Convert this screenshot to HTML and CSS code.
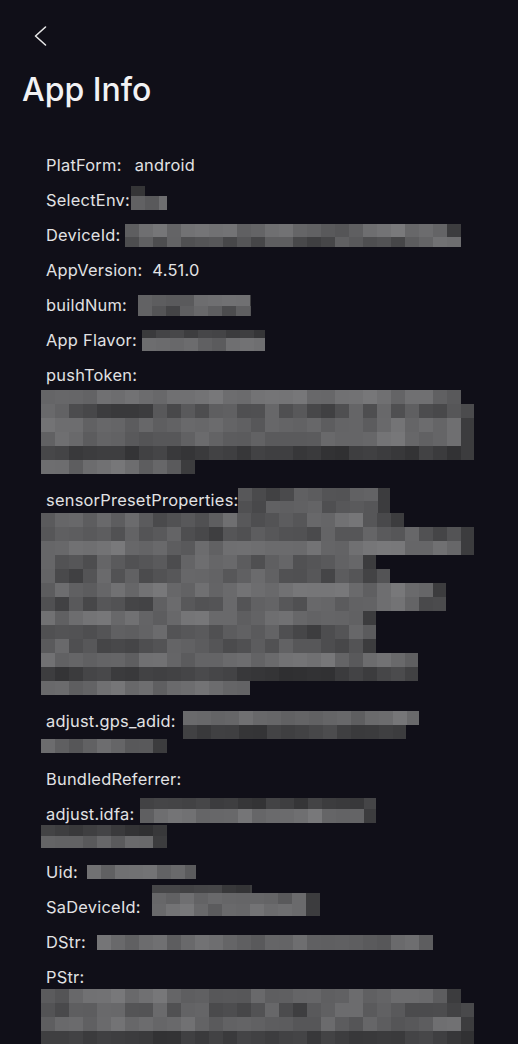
FILE: index.html
```html
<!DOCTYPE html>
<html lang="en">
<head>
<meta charset="utf-8">
<title>App Info</title>
<link rel="stylesheet" href="styles.css">
</head>
<body>
<div class="screen">
  <div class="topbar">
    <svg class="back" width="24" height="24" viewBox="0 0 24 24" fill="none"><path d="M16.5 3 L6.5 12 L16.5 21" stroke="#e6e6e6" stroke-width="1.6" stroke-linecap="round" stroke-linejoin="round"/></svg>
  </div>
  <h1 class="title">App Info</h1>
  <div class="list">
    <div class="row"><div class="line"><span class="label">PlatForm:</span><span class="value value-platform">android</span></div></div>
    <div class="row"><div class="line"><span class="label">SelectEnv:</span><div class="pix pix-env" data-seed="2" data-rows="14:10:d,36:14:m"></div></div></div>
    <div class="row"><div class="line"><span class="label">DeviceId:</span><div class="pix pix-device" data-seed="3" data-rows="336:13:m,336:10:x"></div></div></div>
    <div class="row"><div class="line"><span class="label">AppVersion:</span><span class="value">4.51.0</span></div></div>
    <div class="row"><div class="line"><span class="label">buildNum:</span><div class="pix pix-build" data-seed="5" data-rows="113:11:m,113:10:x"></div></div></div>
    <div class="row"><div class="line"><span class="label">App Flavor:</span><div class="pix pix-flavor" data-seed="6" data-rows="123:8:d,123:13:m"></div></div></div>
    <div class="row row-push">
      <div class="line"><span class="label">pushToken:</span></div>
      <div class="pix block block-push" data-seed="7" data-rows="420:14:m,433:14:x,433:14:m,433:14:m,433:14:d,154:14:m"></div>
    </div>
    <div class="row row-sensor">
      <div class="line line-top"><span class="label">sensorPresetProperties:</span><div class="pix pix-sensor" data-seed="8" data-rows="152:13:x,152:13:x"></div></div>
      <div class="pix block block-sensor" data-seed="9" data-rows="363:14:x,433:14:x,433:14:m,335:14:x,349:14:x,405:14:m,405:14:x,335:14:m,335:14:x,335:14:x,377:14:m,377:14:d,209:14:m"></div>
    </div>
    <div class="row row-gps">
      <div class="line line-top"><span class="label">adjust.gps_adid:</span><div class="pix pix-gps" data-seed="10" data-rows="236:14:m,223:14:d"></div></div>
      <div class="pix block block-gps" data-seed="11" data-rows="126:14:m"></div>
    </div>
    <div class="row"><div class="line"><span class="label">BundledReferrer:</span></div></div>
    <div class="row row-idfa">
      <div class="line line-top"><span class="label">adjust.idfa:</span><div class="pix pix-idfa" data-seed="12" data-rows="236:11:d,236:14:m"></div></div>
      <div class="pix block block-idfa" data-seed="13" data-rows="126:11:d,126:12:m"></div>
    </div>
    <div class="row"><div class="line"><span class="label">Uid:</span><div class="pix pix-uid" data-seed="14" data-rows="109:14:m"></div></div></div>
    <div class="row"><div class="line line-bottom"><span class="label">SaDeviceId:</span><div class="pix pix-sa" data-seed="15" data-rows="100:8:d,168:11:m,168:12:m"></div></div></div>
    <div class="row"><div class="line"><span class="label">DStr:</span><div class="pix pix-dstr" data-seed="16" data-rows="336:15:m"></div></div></div>
    <div class="row row-pstr">
      <div class="line"><span class="label">PStr:</span></div>
      <div class="pix block block-pstr" data-seed="17" data-rows="420:14:m,433:14:x,433:14:m,433:14:d"></div>
    </div>
  </div>
</div>
<script src="script.js"></script>
</body>
</html>
```

FILE: styles.css
```css
html, body {
  margin: 0;
  padding: 0;
  background: #100f18;
}
.screen {
  width: 518px;
  height: 1044px;
  overflow: hidden;
  background: #100f18;
  color: #e2e2e4;
  font-family: "Inter", "Noto Sans", sans-serif;
}
.topbar {
  height: 70px;
  box-sizing: border-box;
  padding: 24px 0 0 29px;
}
.back {
  display: block;
}
.title {
  margin: 0;
  padding-left: 22px;
  height: 40px;
  line-height: 40px;
  font-size: 32px;
  font-weight: 500;
  color: #f2f2f4;
}
.list {
  padding: 43px 0 0 46px;
}
.row {
  margin-bottom: 11px;
}
.line {
  display: flex;
  align-items: center;
  height: 24px;
  line-height: 24px;
  font-size: 16.4px;
  letter-spacing: 0.25px;
  white-space: nowrap;
}
.line-top {
  align-items: flex-start;
}
.line-bottom {
  align-items: flex-end;
}
.label {
  flex: none;
}
.value {
  margin-left: 10px;
}
.value-platform {
  margin-left: 13px;
}
.pix {
  display: flex;
  flex-direction: column;
  flex: none;
  margin-left: 3px;
}
.pix-row {
  display: flex;
  overflow: hidden;
  flex: none;
}
.pix-cell {
  flex: none;
  width: 14px;
  height: 100%;
}
.block {
  margin-left: -5px;
}
.pix-env { align-self: flex-end; margin-bottom: 2px; margin-left: 1px; }
.pix-device { margin-left: 4px; }
.pix-build { margin-left: 11px; }
.pix-flavor { margin-left: 5px; }
.pix-sensor { margin-left: -1px; }
.pix-gps { margin-top: 2px; margin-left: 7px; }
.pix-idfa { margin-top: -4px; margin-left: 6px; }
.pix-uid { margin-left: 9px; }
.pix-sa { margin-bottom: 3px; margin-left: 11px; }
.pix-dstr { margin-left: 11px; }
.row-push { margin-bottom: 14px; }
.block-push { margin-top: 3px; }
.row-sensor { margin-bottom: 14px; }
.block-sensor { margin-top: 1px; }
.row-gps { margin-bottom: 14px; }
.block-gps { margin-top: 6px; }
.row-idfa { margin-bottom: 12px; }
.block-idfa { margin-top: -1px; }
```

FILE: script.js
```js
(function () {
  function rng(seed) {
    var s = (seed * 7919) % 2147483647;
    if (s <= 0) s += 2147483646;
    return function () {
      s = (s * 16807) % 2147483647;
      return (s - 1) / 2147483646;
    };
  }
  var ranges = { d: [42, 80], x: [50, 125], m: [78, 128] };
  var blocks = document.querySelectorAll('.pix');
  for (var i = 0; i < blocks.length; i++) {
    var el = blocks[i];
    var r = rng(parseInt(el.getAttribute('data-seed'), 10) || i + 1);
    var specs = el.getAttribute('data-rows').split(',');
    for (var j = 0; j < specs.length; j++) {
      var p = specs[j].split(':');
      var w = parseInt(p[0], 10), h = parseInt(p[1], 10);
      var rg = ranges[p[2]] || ranges.m;
      var row = document.createElement('div');
      row.className = 'pix-row';
      row.style.width = w + 'px';
      row.style.height = h + 'px';
      var n = Math.ceil(w / 14);
      var prev = (rg[0] + rg[1]) / 2;
      for (var k = 0; k < n; k++) {
        var c = document.createElement('span');
        c.className = 'pix-cell';
        var fresh = rg[0] + r() * (rg[1] - rg[0]);
        var v = prev * 0.45 + fresh * 0.55;
        prev = v;
        if (k === n - 1 && r() < 0.5) v = Math.min(v, 60);
        v = Math.round(v);
        c.style.backgroundColor = 'rgb(' + v + ',' + v + ',' + (v + 2) + ')';
        row.appendChild(c);
      }
      el.appendChild(row);
    }
  }
})();
```
